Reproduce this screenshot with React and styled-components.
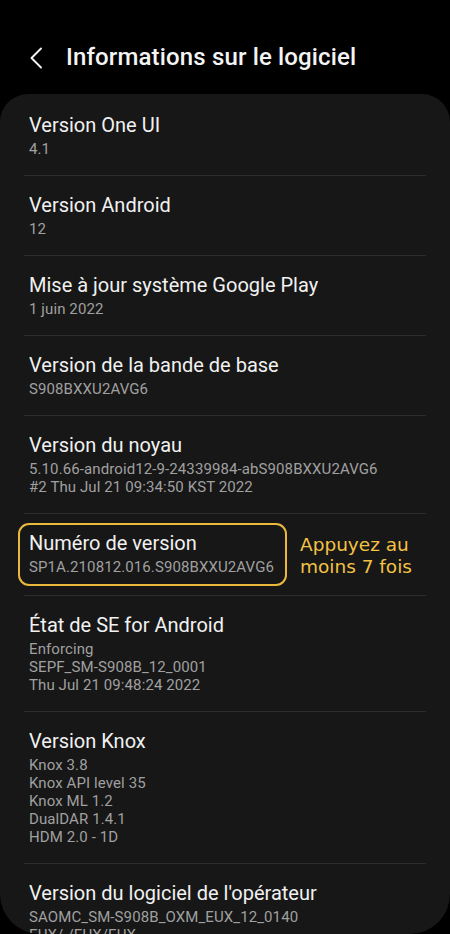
import React from "react";
import styled, { createGlobalStyle } from "styled-components";

const GlobalStyle = createGlobalStyle`
  html, body {
    margin: 0;
    padding: 0;
    background: #000;
  }
  body {
    font-family: Roboto, "Noto Sans", sans-serif;
    -webkit-font-smoothing: antialiased;
  }
`;

const Screen = styled.div`
  width: 450px;
  height: 934px;
  background: #000;
  overflow: hidden;
  display: flex;
  flex-direction: column;
`;

const Header = styled.div`
  height: 74px;
  padding-top: 20px;
  display: flex;
  align-items: center;
  box-sizing: content-box;
  flex-shrink: 0;
`;

const BackButton = styled.div`
  width: 66px;
  display: flex;
  justify-content: flex-start;
  padding-left: 28px;
  box-sizing: border-box;
  margin-top: 1px;
`;

const Title = styled.h1`
  margin: 0;
  font-size: 24px;
  font-weight: 500;
  color: #f4f4f4;
  letter-spacing: 0.15px;
`;

const Card = styled.div`
  flex: 1;
  background: #171717;
  border-radius: 28px 28px 40px 40px;
  padding-top: 2px;
  overflow: hidden;
`;

const Row = styled.div`
  margin: 0 24px;
  padding: 16px 0 17px 5px;
  border-bottom: ${(p) => (p.$last ? "none" : "1px solid #2c2c2c")};
  display: flex;
  align-items: flex-start;
`;

const Texts = styled.div`
  display: flex;
  flex-direction: column;
  position: relative;

  ${(p) =>
    p.$highlight &&
    `
    &::before {
      content: "";
      position: absolute;
      top: -7px;
      left: -11px;
      right: -13px;
      bottom: -10px;
      border: 2px solid #eab93c;
      border-radius: 11px;
      pointer-events: none;
    }
  `}
`;

const ItemTitle = styled.div`
  font-size: 20px;
  line-height: 26px;
  color: #f1f1f1;
  margin-bottom: 2px;
  white-space: nowrap;
`;

const ItemValue = styled.div`
  font-size: 15px;
  line-height: 18px;
  color: #a0a0a0;
  white-space: nowrap;
  letter-spacing: 0.1px;
`;

const Hint = styled.div`
  margin: 4px 0 0 26px;
  font-family: "DejaVu Sans", Verdana, sans-serif;
  font-size: 18.5px;
  line-height: 22px;
  color: #f3c245;
`;

const items = [
  { title: "Version One UI", values: ["4.1"] },
  { title: "Version Android", values: ["12"] },
  { title: "Mise à jour système Google Play", values: ["1 juin 2022"] },
  { title: "Version de la bande de base", values: ["S908BXXU2AVG6"] },
  {
    title: "Version du noyau",
    values: [
      "5.10.66-android12-9-24339984-abS908BXXU2AVG6",
      "#2 Thu Jul 21 09:34:50 KST 2022",
    ],
  },
  {
    title: "Numéro de version",
    values: ["SP1A.210812.016.S908BXXU2AVG6"],
    highlight: true,
  },
  {
    title: "État de SE for Android",
    values: ["Enforcing", "SEPF_SM-S908B_12_0001", "Thu Jul 21 09:48:24 2022"],
  },
  {
    title: "Version Knox",
    values: [
      "Knox 3.8",
      "Knox API level 35",
      "Knox ML 1.2",
      "DualDAR 1.4.1",
      "HDM 2.0 - 1D",
    ],
  },
  {
    title: "Version du logiciel de l'opérateur",
    values: ["SAOMC_SM-S908B_OXM_EUX_12_0140", "EUX/-/EUX/EUX"],
  },
];

const App = () => {
  return (
    <>
      <GlobalStyle />
      <Screen>
        <Header>
          <BackButton>
            <svg width="16" height="22" viewBox="0 0 16 22" fill="none">
              <path
                d="M13 1.5 L3.5 11 L13 20.5"
                stroke="#f2f2f2"
                strokeWidth="1.9"
                strokeLinecap="round"
                strokeLinejoin="round"
              />
            </svg>
          </BackButton>
          <Title>Informations sur le logiciel</Title>
        </Header>
        <Card>
          {items.map((item, i) => (
            <Row key={item.title} $last={i === items.length - 1}>
              <Texts $highlight={item.highlight}>
                <ItemTitle>{item.title}</ItemTitle>
                {item.values.map((v) => (
                  <ItemValue key={v}>{v}</ItemValue>
                ))}
              </Texts>
              {item.highlight && (
                <Hint>
                  Appuyez au
                  <br />
                  moins 7 fois
                </Hint>
              )}
            </Row>
          ))}
        </Card>
      </Screen>
    </>
  );
};

export default App;
